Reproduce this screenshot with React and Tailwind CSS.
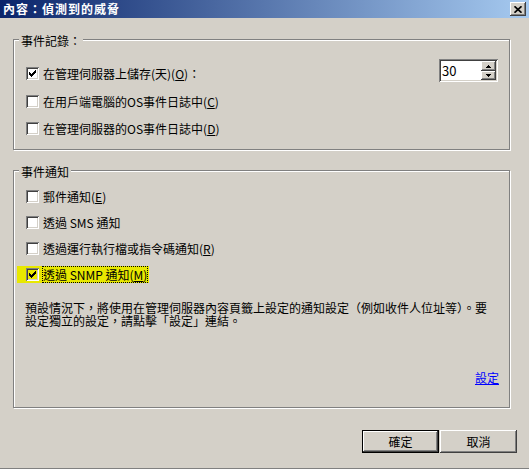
import React from "react";

function Check({ checked, bg = "bg-white" }) {
  const px = [[3, 5], [4, 6], [5, 7], [6, 6], [7, 5], [8, 4], [9, 3]];
  return (
    <div className={`relative w-[13px] h-[13px] shrink-0 ${bg} shadow-[inset_1px_1px_0_#808080,inset_-1px_-1px_0_#ffffff,inset_2px_2px_0_#404040,inset_-2px_-2px_0_#d4d0c8]`}>
      {checked && (
        <svg className="absolute left-0 top-0" width="13" height="13" viewBox="0 0 13 13" shapeRendering="crispEdges">
          {px.map(([x, y]) => (
            <rect key={x} x={x} y={y} width="1" height="3" fill="#000" />
          ))}
        </svg>
      )}
    </div>
  );
}

function Row({ checked, children, className = "" }) {
  return (
    <div className={`flex items-center gap-[4px] h-[17px] ${className}`}>
      <Check checked={checked} />
      <span className="whitespace-nowrap">{children}</span>
    </div>
  );
}

function Group({ title, className = "", children }) {
  return (
    <div className={`relative ml-[13px] w-[497px] border border-[#808080] shadow-[1px_1px_0_#ffffff,inset_1px_1px_0_#ffffff] ${className}`}>
      <span className="absolute left-[5px] top-[-7px] bg-[#d4d0c8] px-[2px] leading-[16px] whitespace-nowrap">{title}</span>
      {children}
    </div>
  );
}

function Raised({ className = "", children }) {
  return (
    <div className={`bg-[#d4d0c8] shadow-[inset_-1px_-1px_0_#404040,inset_1px_1px_0_#ffffff,inset_-2px_-2px_0_#808080] ${className}`}>
      {children}
    </div>
  );
}

function Spinner() {
  return (
    <div className="flex w-[59px] h-[23px] p-[2px] bg-white shadow-[inset_1px_1px_0_#808080,inset_-1px_-1px_0_#ffffff,inset_2px_2px_0_#404040,inset_-2px_-2px_0_#d4d0c8] shrink-0">
      <div className="flex-1 flex items-center pl-[1px] text-[13px] leading-[19px]">30</div>
      <div className="flex flex-col w-[15px]">
        <Raised className="h-[10px] flex items-center justify-center">
          <svg width="5" height="3" viewBox="0 0 5 3" shapeRendering="crispEdges">
            <path d="M2 0h1v1h1v1h1v1H0V2h1V1h1z" fill="#000" />
          </svg>
        </Raised>
        <Raised className="h-[9px] flex items-center justify-center">
          <svg width="5" height="3" viewBox="0 0 5 3" shapeRendering="crispEdges">
            <path d="M0 0h5v1H4v1H3v1H2V2H1V1H0z" fill="#000" />
          </svg>
        </Raised>
      </div>
    </div>
  );
}

function U({ children }) {
  return <span className="underline">{children}</span>;
}

export default function App() {
  return (
    <div className="w-[529px] h-[469px] bg-[#d4d0c8] border-b border-[#808080] flex flex-col text-[12px] text-black font-['Noto_Sans_CJK_TC',sans-serif] leading-[17px] overflow-hidden">
      <div className="h-[18px] shrink-0 flex items-center justify-between pl-[3px] pr-[3px] bg-[linear-gradient(to_right,#0a246a,#a6caf0)]">
        <span className="text-white font-bold leading-[18px] tracking-[1px]">內容：偵測到的威脅</span>
        <Raised className="w-[16px] h-[14px] flex items-center justify-center">
          <svg width="8" height="7" viewBox="0 0 8 7">
            <path d="M0.5 0.3 L7.5 6.7 M7.5 0.3 L0.5 6.7" stroke="#000" strokeWidth="1.7" />
          </svg>
        </Raised>
      </div>

      <Group title="事件記錄：" className="mt-[21px] h-[111px] pt-[19px] pl-[12px] pr-[11px]">
        <div className="flex items-start justify-between">
          <Row checked className="mt-[6px]">
            在管理伺服器上儲存(天)(<U>O</U>)：
          </Row>
          <Spinner />
        </div>
        <Row className="mt-[11px]">
          在用戶端電腦的OS事件日誌中(<U>C</U>)
        </Row>
        <Row className="mt-[10px]">
          在管理伺服器的OS事件日誌中(<U>D</U>)
        </Row>
      </Group>

      <Group title="事件通知" className="mt-[20px] h-[238px] pt-[17px] pl-[12px] pr-[10px] flex flex-col">
        <Row>
          郵件通知(<U>E</U>)
        </Row>
        <Row className="mt-[9px]">透過 SMS 通知</Row>
        <Row className="mt-[9px]">
          透過運行執行檔或指令碼通知(<U>R</U>)
        </Row>
        <div className="mt-[9px] self-start ml-[-9px] pl-[9px] pr-[1px] h-[17px] flex items-center gap-[3px] bg-[#e8e800]">
          <Check checked bg="bg-[#e8e800]" />
          <span className="whitespace-nowrap border border-dotted border-black leading-[15px]">
            透過 SNMP 通知(<U>M</U>)
          </span>
        </div>
        <div className="mt-[18px] ml-[-1px] flex flex-col">
          <div className="h-[13px] leading-[13px] whitespace-nowrap">
            預設情況下，將使用在管理伺服器內容頁籤上設定的通知設定（例如收件人位址等）。要
          </div>
          <div className="h-[13px] leading-[13px] whitespace-nowrap">設定獨立的設定，請點擊「設定」連結。</div>
        </div>
        <a className="mt-[44px] self-end leading-[13px] text-[#0000ff] underline">設定</a>
      </Group>

      <div className="mt-[22px] flex justify-end pr-[12px]">
        <div className="border border-black">
          <Raised className="w-[75px] h-[21px] flex items-center justify-center leading-[17px]">確定</Raised>
        </div>
        <Raised className="ml-[1px] w-[77px] h-[23px] flex items-center justify-center leading-[17px]">取消</Raised>
      </div>
    </div>
  );
}
